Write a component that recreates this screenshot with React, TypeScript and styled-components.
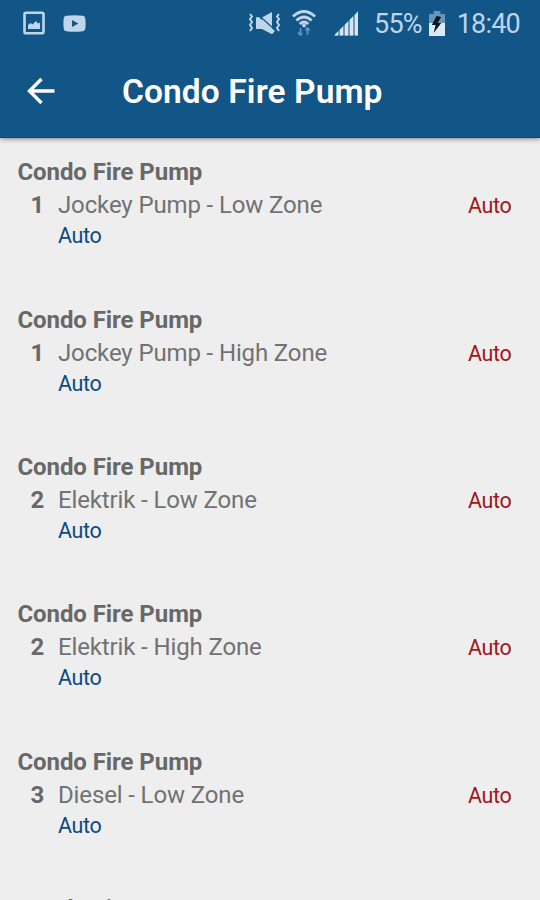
import React from "react";
import styled, { createGlobalStyle } from "styled-components";

const GlobalStyle = createGlobalStyle`
  * { box-sizing: border-box; }
  html, body { margin: 0; padding: 0; background: #eeeeee; overflow: hidden; }
  body { font-family: Roboto, "Liberation Sans", sans-serif; }
`;

const Screen = styled.main`
  width: 540px;
  height: 900px;
  overflow: hidden;
  display: flex;
  flex-direction: column;
  background: #eeeeee;
`;

const Header = styled.header`
  flex: none;
  height: 138px;
  background: #115687;
  border-bottom: 1px solid #0b4675;
  box-shadow: 0 1px 5px rgba(0, 0, 0, 0.45);
  z-index: 1;
`;

const StatusBar = styled.div`
  display: flex;
  justify-content: space-between;
  height: 46px;
  padding: 0 20px 0 23px;
  color: #bfd5ea;
`;

const StatusGroup = styled.div`
  display: flex;
  align-items: center;
  height: 46px;
`;

const Icon = styled.svg<{ $gap?: number }>`
  display: block;
  flex: none;
  margin-right: ${(p) => p.$gap ?? 0}px;
`;

const StatusText = styled.span<{ $gap?: number; $track: number }>`
  font-size: 27px;
  line-height: 46px;
  padding-top: 1px;
  letter-spacing: ${(p) => p.$track}px;
  margin-right: ${(p) => p.$gap ?? 0}px;
`;

const Toolbar = styled.div`
  display: flex;
  align-items: center;
  height: 90px;
  padding-left: 27px;
`;

const BackButton = styled.button`
  border: 0;
  padding: 0;
  background: none;
  width: 95px;
`;

const Title = styled.h1`
  margin: 0;
  padding-top: 1px;
  font-size: 33.5px;
  line-height: 40px;
  font-weight: 600;
  letter-spacing: 0.1px;
  color: #ffffff;
  white-space: nowrap;
`;

const List = styled.ul`
  list-style: none;
  margin: 0;
  padding: 18.4px 0 0;
`;

const Item = styled.li`
  height: 147.33px;
  padding: 0 28.5px 0 17.4px;
  white-space: nowrap;
`;

const Heading = styled.h2`
  margin: 0;
  font-size: 24px;
  line-height: 33px;
  font-weight: 700;
  letter-spacing: -0.07px;
  color: #686868;
`;

const Row = styled.div`
  display: flex;
  height: 33px;
  padding-left: 13px;
  font-size: 24px;
  line-height: 33px;
  color: #727272;
`;

const Index = styled.b`
  width: 27.6px;
  color: #686868;
`;

const Name = styled.span`
  flex: 1;
  letter-spacing: -0.13px;
`;

const State = styled.span<{ $tone: "red" | "blue" }>`
  font-size: 21.5px;
  letter-spacing: -0.35px;
  color: ${(p) => (p.$tone === "red" ? "#a3151b" : "#0b4a85")};
`;

const Detail = styled.div`
  padding-left: 40.6px;
  line-height: 28.4px;
`;

const items = [
  { index: 1, name: "Jockey Pump - Low Zone" },
  { index: 1, name: "Jockey Pump - High Zone" },
  { index: 2, name: "Elektrik - Low Zone" },
  { index: 2, name: "Elektrik - High Zone" },
  { index: 3, name: "Diesel - Low Zone" },
  { index: 3, name: "Diesel - High Zone" },
];

const PictureIcon = () => (
  <Icon $gap={18} width="22" height="24" viewBox="0 0 22 24">
    <rect x="1.5" y="1.7" width="19" height="20.6" rx="1.5" fill="none" stroke="currentColor" strokeWidth="2.6" />
    <path d="M5 18V14l2.5-2 2 1.5L13 10l2 2.5 2-1V18Z" fill="currentColor" />
  </Icon>
);

const VideoIcon = () => (
  <Icon width="23" height="17" viewBox="0 0 23 17">
    <path d="M3 .8Q11.5-.3 20 .8 22 1 22.3 3.5q.6 5 0 10Q22 16 20 16.2q-8.5 1-17 0Q1 16 .7 13.5q-.6-5 0-10Q1 1 3 .8Z" fill="currentColor" />
    <path d="M9 5v7l6.3-3.5Z" fill="#115687" />
  </Icon>
);

const MuteIcon = () => (
  <Icon $gap={11} width="33" height="24" viewBox="0 0 33 24">
    <path d="M8 6.5h4v10H8ZM14 6.5 24 1v17L14 11Z" fill="currentColor" />
    <path d="M10 3.5 27 19" stroke="#115687" strokeWidth="1.2" />
    <path d="M8 6.5h3L27 20l-3 3.3L14 18H8Z" fill="currentColor" />
    <path d="m2 3 2 2.5L2 8l2 3-2 3 2 3-2 3M31 3l-2 2.5L31 8l-2 3 2 3-2 3 2 3" fill="none" stroke="currentColor" strokeWidth="2" />
  </Icon>
);

const WifiIcon = () => (
  <Icon $gap={18} width="24" height="26" viewBox="0 0 24 26">
    <g fill="none" stroke="currentColor" strokeWidth="2.8">
      <path d="M1 6.5Q12-3.5 23 6.5" />
      <path d="M4.4 10.6q7.6-7.1 15.2 0" />
      <path d="M7.7 14q4.3-4 8.6 0" />
    </g>
    <circle cx="12" cy="15.4" r="1.9" fill="currentColor" />
    <path d="M8.5 18v7M6 22.5 8.5 25l1.7-2M15.5 25v-7M13.5 20l2-2 2.2 2.4" fill="none" stroke="#5f93bf" strokeWidth="1.8" />
  </Icon>
);

const SignalIcon = () => (
  <Icon $gap={16} width="24" height="25" viewBox="0 0 24 25">
    <path d="M0 24.5 24 .5v24Z" fill="#6f9abd" />
    <path d="M1 24.5v-1l3-3v4ZM6 24.5v-6l3-3v9ZM11 24.5v-11l3-3v14ZM16 24.5v-16l3-3v19ZM21 24.5v-21L24 .5v24Z" fill="#d9e6f1" />
  </Icon>
);

const BatteryIcon = () => (
  <Icon $gap={12} width="16" height="25" viewBox="0 0 17 25" preserveAspectRatio="none">
    <path d="M5 0h7v3h5v10H0V3h5Z" fill="#6896ba" />
    <path d="M0 12h17v13H0Z" fill="#dce9f4" />
    <path d="m8 5-5 9h4l-2 8 8-10H9l4-6Z" fill="#08151f" />
  </Icon>
);

const BackIcon = () => (
  <Icon width="29" height="28" viewBox="0 0 29 28">
    <path d="M27.5 14H3M14.5 2 2.5 14l12 12" fill="none" stroke="#fff" strokeWidth="3.4" />
  </Icon>
);

export default function App() {
  return (
    <>
      <GlobalStyle />
      <Screen>
        <Header>
          <StatusBar>
            <StatusGroup>
              <PictureIcon />
              <VideoIcon />
            </StatusGroup>
            <StatusGroup>
              <MuteIcon />
              <WifiIcon />
              <SignalIcon />
              <StatusText $track={-0.8} $gap={7}>55%</StatusText>
              <BatteryIcon />
              <StatusText $track={-0.8}>18:40</StatusText>
            </StatusGroup>
          </StatusBar>
          <Toolbar>
            <BackButton aria-label="Back">
              <BackIcon />
            </BackButton>
            <Title>Condo Fire Pump</Title>
          </Toolbar>
        </Header>
        <List>
          {items.map((item) => (
            <Item key={item.name}>
              <Heading>Condo Fire Pump</Heading>
              <Row>
                <Index>{item.index}</Index>
                <Name>{item.name}</Name>
                <State $tone="red">Auto</State>
              </Row>
              <Detail>
                <State $tone="blue">Auto</State>
              </Detail>
            </Item>
          ))}
        </List>
      </Screen>
    </>
  );
}
